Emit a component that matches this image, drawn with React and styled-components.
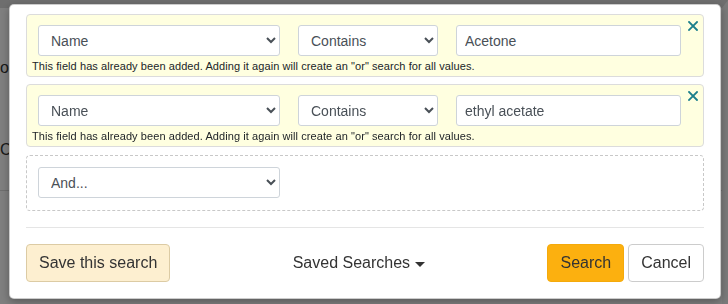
import React from "react";
import styled, { createGlobalStyle } from "styled-components";

const Global = createGlobalStyle`
  html, body { margin: 0; padding: 0; }
  body {
    width: 728px;
    height: 304px;
    overflow: hidden;
    background: #fff;
    font-family: "Liberation Sans", Arial, sans-serif;
    color: #333;
  }
  * { box-sizing: border-box; }
`;

const Page = styled.div`
  width: 728px;
  height: 304px;
  display: flex;
  flex-direction: column;
  border-top: 8px solid #dcdcdc;
  border-right: 6px solid #f4f4f4;
`;

const PageText = styled.div`
  font-size: 16px;
  line-height: 20px;
  color: #333;
  margin-top: ${(p) => p.$top}px;
  white-space: nowrap;
`;

const PageRule = styled.div`
  margin-top: 30px;
  border-top: 1px solid #ddd;
`;

const Backdrop = styled.div`
  position: fixed;
  inset: 0;
  background: rgba(0, 0, 0, 0.5);
`;

const Modal = styled.div`
  position: fixed;
  top: 4px;
  left: 9px;
  width: 712px;
  background: #fff;
  border: 1px solid rgba(0, 0, 0, 0.2);
  border-radius: 5px;
  padding: 9px 16px 16px;
  box-shadow: 0 3px 9px rgba(0, 0, 0, 0.3);
`;

const FieldGroup = styled.div`
  position: relative;
  background: #ffffe0;
  border: 1px solid #dcdcdc;
  border-radius: 4px;
  padding: 10px 5px 2px;
  margin-bottom: ${(p) => p.$gap}px;
`;

const EmptyGroup = styled.div`
  border: 1px dashed #c8c8c8;
  border-radius: 4px;
  padding: 11px 11px 12px;
`;

const Row = styled.div`
  display: flex;
  gap: 18px;
  padding: 0 17px 0 6px;
`;

const Select = styled.select`
  width: ${(p) => p.$w}px;
  flex: none;
  height: 31px;
  padding: 0 8px;
  font-family: "Liberation Sans", Arial, sans-serif;
  font-size: 14px;
  color: #495057;
  background-color: #fff;
  border: 1px solid #ced4da;
  border-radius: 3px;
  outline: none;
`;

const TextInput = styled.input`
  flex: 1;
  min-width: 0;
  height: 31px;
  padding: 0 8px;
  font-family: "Liberation Sans", Arial, sans-serif;
  font-size: 14px;
  color: #495057;
  background: #fff;
  border: 1px solid #ced4da;
  border-radius: 3px;
  outline: none;
`;

const Help = styled.div`
  margin-top: 3px;
  font-size: 11px;
  line-height: 15px;
  letter-spacing: 0.08px;
  color: #212529;
  white-space: nowrap;
`;

const Close = styled.button`
  position: absolute;
  top: 6px;
  right: 5px;
  width: 10px;
  height: 10px;
  padding: 0;
  border: 0;
  background: none;
  display: flex;
  cursor: pointer;
`;

const Divider = styled.hr`
  margin: 16px 0 16px;
  border: 0;
  border-top: 1px solid #e5e5e5;
`;

const Footer = styled.div`
  display: flex;
  align-items: center;
  justify-content: space-between;
`;

const Button = styled.button`
  height: 38px;
  padding: 0 12px;
  font-family: "Liberation Sans", Arial, sans-serif;
  font-size: 16px;
  color: #333;
  border-radius: 4px;
  border: 1px solid ${(p) => p.$border};
  background: ${(p) => p.$bg};
  cursor: pointer;
`;

const Actions = styled.div`
  display: flex;
  gap: 4px;
`;

const Dropdown = styled.button`
  display: flex;
  align-items: center;
  border: 0;
  background: none;
  padding: 0;
  font-family: "Liberation Sans", Arial, sans-serif;
  font-size: 16px;
  color: #333;
  cursor: pointer;
`;

const Caret = styled.span`
  display: inline-block;
  margin-left: 5px;
  margin-top: 2px;
  border-top: 5px solid #333;
  border-left: 5px solid transparent;
  border-right: 5px solid transparent;
`;

const CloseIcon = () => (
  <svg width="10" height="10" viewBox="0 0 10 10">
    <path d="M1 1 L9 9 M9 1 L1 9" stroke="#1b7f8c" strokeWidth="1.8" strokeLinecap="square" />
  </svg>
);

const HELP =
  'This field has already been added. Adding it again will create an "or" search for all values.';

const Criterion = ({ value, gap }) => (
  <FieldGroup $gap={gap}>
    <Row>
      <Select $w={242} defaultValue="name">
        <option value="name">Name</option>
      </Select>
      <Select $w={140} defaultValue="contains">
        <option value="contains">Contains</option>
      </Select>
      <TextInput defaultValue={value} />
    </Row>
    <Help>{HELP}</Help>
    <Close aria-label="Remove">
      <CloseIcon />
    </Close>
  </FieldGroup>
);

export default function App() {
  return (
    <>
      <Global />
      <Page>
        <PageText $top={50}>or</PageText>
        <PageText $top={62}>Chemical</PageText>
        <PageRule />
      </Page>
      <Backdrop />
      <Modal>
        <Criterion value="Acetone" gap={7} />
        <Criterion value="ethyl acetate" gap={8} />
        <EmptyGroup>
          <Select $w={242} defaultValue="and">
            <option value="and">And...</option>
          </Select>
        </EmptyGroup>
        <Divider />
        <Footer>
          <Button $bg="#fdefd0" $border="#dccba4">Save this search</Button>
          <Dropdown>
            Saved Searches
            <Caret />
          </Dropdown>
          <Actions>
            <Button $bg="#fcb00f" $border="#f4aa0c">Search</Button>
            <Button $bg="#fff" $border="#ccc">Cancel</Button>
          </Actions>
        </Footer>
      </Modal>
    </>
  );
}
